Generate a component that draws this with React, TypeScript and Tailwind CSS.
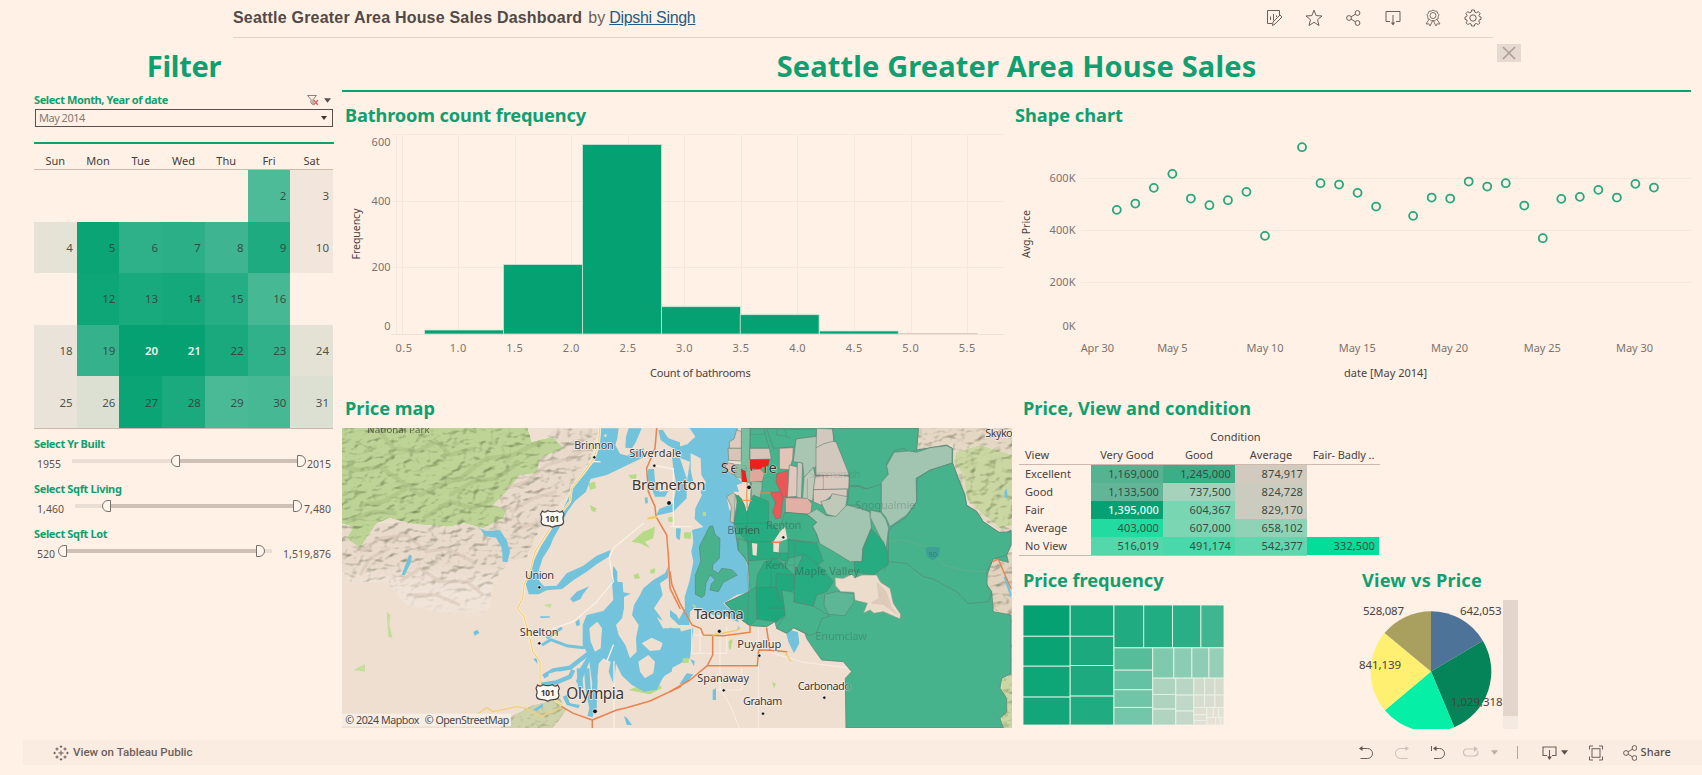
import React from "react";

const NOTO = '"Noto Sans", sans-serif';

/* ---------- calendar ---------- */

const DAYS = ["Sun", "Mon", "Tue", "Wed", "Thu", "Fri", "Sat"];
type Day = [number, string] | null;
const WEEKS: Day[][] = [
  [null, null, null, null, null, [2, "#4ebb98"], [3, "#f2e5dc"]],
  [[4, "#e5e3d6"], [5, "#0ba475"], [6, "#2eb089"], [7, "#2aaf86"], [8, "#3eb590"], [9, "#1eab7f"], [10, "#f2e5dc"]],
  [null, [12, "#0ea577"], [13, "#18a97c"], [14, "#14a87a"], [15, "#25ae84"], [16, "#46b894"], null],
  [[18, "#eae3d9"], [19, "#35b28b"], [20, "#05a173"], [21, "#05a173"], [22, "#19a97d"], [23, "#31b18a"], [24, "#e4e1d5"]],
  [[25, "#eae3d9"], [26, "#dbe0d3"], [27, "#0ba475"], [28, "#1baa7d"], [29, "#4aba96"], [30, "#46b894"], [31, "#dbe0d3"]],
];

function Calendar() {
  return (
    <div className="mt-[9px] h-[276px] w-[299px]">
      <div className="grid h-[17px] grid-cols-7 border-b border-[#cfb9ae] text-center text-[11px] leading-[15px] text-[#443c39]">
        {DAYS.map((d) => (
          <span key={d}>{d}</span>
        ))}
      </div>
      <div className="grid h-[259px] grid-cols-7 grid-rows-5 border-b border-[#cfb9ae]">
        {WEEKS.flat().map((d, i) =>
          d ? (
            <div
              key={i}
              className={`flex items-center justify-end pr-[4px] text-[11.5px] ${
                d[0] === 20 || d[0] === 21 ? "font-semibold text-[#e4f7ee]" : "text-[#33413a]/90"
              }`}
              style={{ backgroundColor: d[1] }}
            >
              {d[0]}
            </div>
          ) : (
            <div key={i} />
          ),
        )}
      </div>
    </div>
  );
}

/* ---------- range filters ---------- */

type Range = {
  title: string;
  min: string;
  max: string;
  track: [number, number];
  handles: [number, number];
  minLen: number;
  maxLen: number;
};
const RANGES: Range[] = [
  { title: "Select Yr Built", min: "1955", max: "2015", track: [38, 262], handles: [137, 272], minLen: 24, maxLen: 24 },
  { title: "Select Sqft Living", min: "1,460", max: "7,480", track: [41, 268], handles: [68, 268], minLen: 27, maxLen: 27 },
  { title: "Select Sqft Lot", min: "520", max: "1,519,876", track: [24, 238], handles: [24, 231], minLen: 18, maxLen: 48 },
];

function RangeFilter({ r }: { r: Range }) {
  const [a, b] = r.handles;
  return (
    <div className="h-[45px]">
      <div className="h-[16px] text-[11px] leading-[16px] font-bold tracking-[-0.350px] text-[#0f9f70]">{r.title}</div>
      <svg width="300" height="24" className="block" fontFamily={NOTO} fontSize="10.500" fill="#5b524e">
        <rect x={r.track[0]} y="7" width={r.track[1] - r.track[0]} height="4" fill="#eaddd3" />
        <rect x={a + 9} y="7" width={b - a - 18} height="4" fill="#cfc0b5" />
        <path
          d={`M${a + 8.5} 3.5 V14.5 H${a + 6} A5.5 5.5 0 0 1 ${a + 6} 3.5 Z`}
          fill="#fff6ee"
          stroke="#7b706a"
        />
        <path
          d={`M${b - 8.5} 3.5 V14.5 H${b - 6} A5.5 5.5 0 0 0 ${b - 6} 3.5 Z`}
          fill="#fff6ee"
          stroke="#7b706a"
        />
        <text x="3" y="15.500" textLength={r.minLen}>{r.min}</text>
        <text x={297 - r.maxLen} y="15.500" textLength={r.maxLen}>{r.max}</text>
      </svg>
    </div>
  );
}

/* ---------- histogram ---------- */

const BARS = [
  [82.6, 202],
  [161.5, 136.5],
  [240.6, 16.5],
  [319.6, 178.7],
  [398.2, 186.7],
  [477.4, 203],
];

function Histogram() {
  return (
    <svg width="670" height="262" className="block" fontFamily={NOTO} fontSize="11">
      <g stroke="#f6e7dc" strokeWidth="1">
        {[6.5, 73.5, 139.5].map((y) => (
          <path key={y} d={`M50 ${y}H662`} />
        ))}
        <path d="M54.5 6V206" />
        {Array.from({ length: 11 }, (_, i) => (
          <path key={i} d={`M${Math.round(59.5 + i * 56.57) + 0.5} 6V206`} />
        ))}
      </g>
      <path d="M50 206.5H662" stroke="#efdfd5" />
      {BARS.map(([x, y]) => (
        <rect key={x} x={x} y={y} width="78.9" height={206 - y} fill="#05a173" stroke="#cfe4d5" strokeWidth="0.8" />
      ))}
      <path d="M556 205.5H635.5" stroke="#dccbc1" />
      <g fill="#7d736e" textAnchor="end">
        <text x="48.500" y="17.500">600</text>
        <text x="48.500" y="76.500">400</text>
        <text x="48.500" y="142.500">200</text>
        <text x="48.500" y="202">0</text>
      </g>
      <g fill="#7d736e" textAnchor="middle">
        {Array.from({ length: 11 }, (_, i) => (
          <text key={i} x={i === 0 ? 61.7 : 59.4 + i * 56.57} y="224" textLength="16.5">
            {(0.5 + i * 0.5).toFixed(1)}
          </text>
        ))}
      </g>
      <g fill="#4b423e" textAnchor="middle">
        <text x="358.400" y="249" textLength="100.600">Count of bathrooms</text>
        <text transform="translate(18 106) rotate(-90)" textLength="51" fontSize="10.500">Frequency</text>
      </g>
    </svg>
  );
}

/* ---------- scatter of average price ---------- */

const POINTS: [number, number][] = [
  [2, 344], [3, 325], [4, 278], [5, 236], [6, 310], [7, 330], [8, 315], [9, 290], [10, 422], [12, 156],
  [13, 264], [14, 268], [15, 293], [16, 334], [18, 362], [19, 307], [20, 310], [21, 259], [22, 274], [23, 264],
  [24, 331], [25, 429], [26, 311], [27, 305], [28, 284], [29, 307], [30, 266], [31, 277],
];
const TICKS: [string, number][] = [
  ["Apr 30", 198], ["May 5", 368], ["May 10", 578], ["May 15", 787], ["May 20", 996], ["May 25", 1206], ["May 30", 1415],
];

function ShapeChart() {
  return (
    <svg width="679" height="262" className="block" fontFamily={NOTO} fontSize="11">
      <g stroke="#f6e7dc">
        <path d="M69 50.500H679M69 102.500H679M69 154.500H679" />
      </g>
      <g fill="none" stroke="#27a87c" strokeWidth="1.800">
        {POINTS.map(([d, y]) => (
          <circle key={d} cx={-2 + (242 + (d - 2) * 41.97) / 2.266} cy={y / 3 - 32.8} r="4" />
        ))}
      </g>
      <g fill="#7d736e" textAnchor="end">
        <text x="63.500" y="54" textLength="26">600K</text>
        <text x="63.500" y="106" textLength="26">400K</text>
        <text x="63.500" y="158" textLength="26">200K</text>
        <text x="63.500" y="202" textLength="13">0K</text>
      </g>
      <g fill="#7d736e" textAnchor="middle">
        {TICKS.map(([t, x]) => (
          <text key={t} x={x / 2.266 - 2} y="224" textLength={t.length === 5 ? 30.5 : t[0] === "A" ? 33.5 : 37}>
            {t}
          </text>
        ))}
      </g>
      <g fill="#4b423e" textAnchor="middle">
        <text x="373.500" y="249" textLength="83">date [May 2014]</text>
        <text transform="translate(18 106) rotate(-90)" textLength="48" fontSize="10.500">Avg. Price</text>
      </g>
    </svg>
  );
}

/* ---------- map ---------- */

const G = "#46b38d";
const DG = "#27ab80";
const SAGE = "#a1c5b1";
const GREY = "#d3c8be";

/* Zip-code areas drawn over the county: [fill, outline] */
const ZONES: [string, string][] = [
  [G, "240,100 282,100 290,135 298,160 240,160"],
  [G, "290,100 365,103 440,102 438,122 410,128 378,132 375,155 310,160"],
  ["#7abf9f", "214,100 240,100 238,200 240,260 232,265 214,225"],
  ["#e1cabd", "200,104 214,110 214,160 178,160 178,140 192,132"],
  ["#d8c5b8", "174,160 214,160 214,198 176,196"],
  ["#d5c6b9", "240,160 298,160 304,192 240,194"],
  ["#e5beb2", "160,203 190,206 194,240 176,232"],
  ["#88bd9f", "194,208 214,210 214,250 196,244"],
  ["#f01f1c", "240,194 298,194 294,212 276,216 268,227 256,220 240,222"],
  ["#f01f1c", "214,224 226,228 232,262 216,260"],
  ["#e0a79b", "240,228 270,222 282,236 276,258 240,260"],
  ["#9dbda7", "244,260 276,260 276,280 268,316 244,314"],
  ["#ea5756", "320,236 352,227 357,262 350,308 338,304 318,262"],
  ["#ea5756", "300,292 330,290 340,308 332,368 318,372 308,352 316,322"],
  ["#e5c3b7", "328,160 370,158 368,192 358,224 328,222"],
  ["#e0c8bd", "358,210 382,216 384,304 352,306"],
  ["#c9c6b9", "382,200 398,205 394,312 380,306"],
  ["#a9c6b2", "378,132 440,124 440,212 402,248 398,204 370,200"],
  ["#bfc9b9", "402,248 430,216 436,246 428,318 398,310"],
  [GREY, "440,100 488,102 492,140 462,148 438,160"],
  [GREY, "438,158 462,146 500,136 538,230 538,240 500,242 438,240"],
  ["#dac9bf", "436,244 500,240 538,244 536,282 430,284"],
  ["#dac7bd", "430,284 532,282 530,308 486,300 452,330 430,320"],
  ["#e1b0a4", "346,308 412,310 426,326 422,358 346,352"],
  ["#c0c8b8", "452,320 480,312 486,296 532,305 524,352 500,366 470,358"],
  [SAGE, "412,358 440,342 470,362 498,364 530,330 578,342 600,352 604,398 578,460 576,500 540,500 488,468 448,445 440,418 426,392 440,382"],
  [G, "492,140 488,100 745,100 740,165 718,172 700,160 672,168 650,205 655,240 640,270 590,282 570,272 538,272 538,240 498,140"],
  [G, "538,275 565,275 588,282 634,268 634,350 608,346 576,344 564,330 532,330"],
  [SAGE, "650,212 672,172 716,168 740,172 780,158 830,152 846,160 846,204 780,225 738,250 740,320 710,360 660,395 648,368 634,350 634,262 655,238"],
  [SAGE, "602,346 632,352 648,374 656,400 648,462 622,410 600,366"],
  [G, "668,392 708,368 740,320 742,250 780,226 848,204 864,250 884,300 890,332 920,350 940,380 985,412 1023,410 1023,450 1010,480 970,492 950,530 952,575 965,590 955,620 895,626 860,590 790,552 760,545 710,505 655,500 655,410"],
  [DG, "604,402 640,440 652,468 655,508 610,540 555,530 552,500 576,500 580,460"],
  ["#3eb188", "344,352 410,358 440,382 428,395 440,418 448,442 410,440 354,434 330,400"],
  [DG, "196,298 214,310 230,350 250,300 296,320 296,385 192,386 204,330"],
  [DG, "196,386 300,384 320,400 336,425 300,440 230,440 205,410"],
  ["#4bb38e", "205,430 232,440 236,510 222,485 204,465"],
  [DG, "234,440 310,440 310,470 328,475 326,490 236,498"],
  [DG, "354,434 440,445 460,498 440,510 400,480 354,490"],
  [DG, "328,474 354,474 354,500 330,495"],
  [DG, "400,476 448,512 490,560 470,590 440,600 430,635 372,620 372,545"],
  [DG, "284,500 320,490 372,540 372,580 258,578 262,540"],
  ["#1ba87b", "260,578 334,576 350,618 346,660 320,680 260,672 256,620"],
  ["#1fa97c", "318,536 372,540 372,585 330,620 318,570"],
  ["#36ad84", "165,624 236,590 258,576 260,672 240,692 215,674"],
  [G, "336,586 372,592 372,622 432,634 480,664 456,670 440,712 420,722 372,698 350,714 320,700 346,660"],
  ["#5db695", "464,598 500,590 552,596 552,622 524,662 476,658 462,630"],
];

const COUNTY =
  "240,100 745,100 740,165 830,150 848,160 848,205 865,250 885,300 890,330 920,350 940,380 985,410 1000,418 1023,405 1023,450 1010,480 1015,502 970,490 955,530 945,560 965,590 970,650 1023,660 1023,836 995,850 990,880 1010,910 1010,950 990,970 1000,999 528,999 526,850 545,830 520,800 455,795 430,760 410,730 405,715 370,698 350,715 320,700 315,680 290,695 240,692 215,675 165,625 240,590 234,500 205,465 192,385 204,300 230,340 240,300";

const CITIES: [string, number, number, number, number, number?][] = [
  ["National Park", 76, 14, 187, 29, 0.75],
  ["Brinnon", 697, 64, 118, 32],
  ["Silverdale", 862, 88, 156, 33],
  ["Bremerton", 869, 187, 222, 44],
  ["Union", 549, 453, 87, 33],
  ["Shelton", 533, 623, 117, 33],
  ["Olympia", 673, 813, 173, 46],
  ["Tacoma", 1055, 572, 150, 44],
  ["Puyallup", 1186, 659, 132, 33],
  ["Spanaway", 1066, 763, 155, 33],
  ["Graham", 1203, 832, 118, 33],
  ["Carbonado", 1367, 785, 160, 33],
  ["Skykomish", 1930, 26, 150, 33],
  ["Burien", 1156, 317, 98, 33, 0.6],
  ["Renton", 1272, 304, 106, 33, 0.35],
  ["Kent", 1270, 422, 68, 33, 0.3],
  ["Maple Valley", 1357, 442, 194, 33, 0.4],
  ["Enumclaw", 1420, 636, 155, 33, 0.25],
  ["Snoqualmie", 1540, 243, 180, 33, 0.22],
  ["Sammamish", 1400, 150, 155, 31, 0.12],
];
const DOTS: [number, number, number][] = [
  [757, 88, 5], [937, 113, 5], [981, 225, 7], [592, 478, 5], [592, 646, 5], [759, 850, 7], [1132, 610, 6],
  [1252, 683, 5], [1145, 787, 5], [1263, 857, 5], [1447, 809, 5], [1221, 178, 7], [1324, 328, 5],
];

function Shield({ x, y }: { x: number; y: number }) {
  return (
    <g transform={`translate(${x} ${y})`}>
      <path
        d="M-30 -23 Q-22 -16 -14 -24 Q0 -18 14 -24 Q22 -16 30 -23 L35 -13 Q29 -2 34 8 Q33 21 16 21 Q6 22 0 26 Q-6 22 -16 21 Q-33 21 -34 8 Q-29 -2 -35 -13Z"
        fill="#fdfaf5"
        stroke="#4a4542"
        strokeWidth="3.500"
      />
      <text textAnchor="middle" y="9" fontSize="25" fontWeight="700" fill="#3f3a38" textLength="42">
        101
      </text>
    </g>
  );
}

function PriceMap() {
  return (
    <svg viewBox="0 0 2010 900" className="block h-[300px] w-[670px]" fontFamily={NOTO}>
      <defs>
        <filter id="relief" x="0" y="0" width="100%" height="100%" colorInterpolationFilters="sRGB">
          <feTurbulence type="fractalNoise" baseFrequency="0.032 0.048" numOctaves="2" seed="11" result="n" />
          <feGaussianBlur in="n" stdDeviation="1.600" result="nb" />
          <feDiffuseLighting in="nb" surfaceScale="9" diffuseConstant="1.200" lightingColor="#ffffff" result="l">
            <feDistantLight azimuth="225" elevation="60" />
          </feDiffuseLighting>
          <feComponentTransfer in="l" result="lc">
            <feFuncR type="linear" slope="0.550" intercept="0.430" />
            <feFuncG type="linear" slope="0.500" intercept="0.480" />
            <feFuncB type="linear" slope="0.600" intercept="0.380" />
          </feComponentTransfer>
          <feBlend in="SourceGraphic" in2="lc" mode="multiply" result="m" />
          <feComposite in="m" in2="SourceGraphic" operator="in" />
        </filter>
        <linearGradient id="fadeDown" x1="0" y1="0" x2="0" y2="1">
          <stop offset="0.720" stopColor="#efdfd0" />
          <stop offset="1" stopColor="#efdfd0" stopOpacity="0" />
        </linearGradient>
      </defs>
      <rect width="2010" height="900" fill="#efdfd0" />

      {/* western land, in a frame shifted by the panel origin */}
      <g transform="translate(-6 -99)">
        <path
          filter="url(#relief)"
          d="M0 390 L200 380 L400 370 L520 260 L640 100 L778 100 L750 200 L690 290 L640 350 L600 400 L560 490 L510 500 L460 560 L450 640 L400 675 L200 630 L140 560 L30 560 L0 520Z"
          fill="url(#fadeDown)"
        />
        <path
          filter="url(#relief)"
          d="M0 90 L560 90 L575 140 L640 125 L670 160 L600 190 L590 235 L540 240 L500 290 L460 330 L500 345 L490 370 L430 400 L370 385 L330 395 L220 388 L150 370 L110 385 L80 430 L60 460 L20 430 L40 395 L0 385Z"
          fill="#c3d99a"
        />
        <g fill="none" stroke="#a3b87d" strokeWidth="13" strokeLinejoin="round" opacity="0.450">
          <path d="M0 215 L60 225 L120 215 L200 270 L240 300 L300 270 L360 250 L440 190 L520 180 L600 140 M60 330 L130 320 L200 280 M330 300 L400 260 L470 250 L540 200 M120 110 L160 160 L230 170 L290 140 L330 180 L400 160 M20 380 L100 350 L170 355 M250 370 L330 320 L400 340 L460 310" />
        </g>
        <g fill="none" stroke="#d3bfac" strokeWidth="10" strokeLinejoin="round" opacity="0.450">
          <path d="M490 280 L560 260 L620 210 L690 190 L740 160 M510 350 L580 310 L650 290 M60 470 L120 430 L200 420 L260 470 L320 460 L400 500 M180 560 L240 520 L300 560 L380 560 L430 600 M200 600 L290 600 L360 630 M540 400 L600 380 M60 540 L90 490 L150 460" />
        </g>
        <path d="M520 960 L580 930 L660 910 L680 945 L640 999 L480 999 L500 975Z" fill="#cdd6a6" opacity="0.800" filter="url(#relief)" />
        <g fill="#b7da87">
          <path d="M875 440 L910 410 L945 395 L940 430 L915 440 L930 460 L900 445Z" />
          <path d="M745 265 L765 260 L768 280 L750 285Z M865 240 L890 238 L888 252 L872 250Z M985 365 L1000 365 L1000 380 L985 380Z M880 540 L895 535 L900 550 L885 552Z M930 525 L946 520 L944 534 L932 536Z M750 330 L770 340 L765 352 L755 348Z M770 685 L785 685 L795 720 L780 715Z M865 885 L900 872 L935 880 L960 870 L965 880 L930 898Z" />
          <path d="M140 650 L152 660 L148 690 L158 730 L145 725Z M40 825 L75 808 L75 830Z M610 630 L635 626 L630 640Z" opacity="0.700" />
        </g>
        <g fill="#74c3dc">
          <path d="M783 100 L836 100 L832 130 L826 150 L840 176 L862 182 L880 168 L912 160 L908 188 L870 206 L830 226 L800 240 L752 252 L738 290 L705 318 L682 350 L656 402 L640 430 L630 455 L608 490 L592 540 L600 560 L612 574 L650 572 L680 535 L730 512 L770 482 L812 465 L806 485 L770 508 L740 530 L700 556 L666 582 L620 586 L596 598 L566 598 L556 562 L580 500 L602 455 L640 395 L660 360 L680 320 L700 275 L732 240 L765 196 L780 150Z" />
          <path d="M866 100 L905 100 L888 140 L876 160 L856 158 L858 125Z" />
          <path d="M955 106 L968 104 L985 130 L1020 142 L1020 170 L985 152 L962 135Z" />
          <path d="M996 186 L1020 190 L1040 250 L1040 310 L1000 350 L948 362 L958 342 L1000 325 L1010 270 L1000 220Z M925 222 L942 222 L945 258 L958 290 L985 288 L975 305 L945 305 L922 250Z M914 308 L922 306 L924 324 L916 326Z" />
          <path d="M420 400 L438 408 L480 406 L500 436 L510 470 L502 502 L488 500 L486 460 L468 428 L436 424Z" />
          <path d="M208 478 L216 484 L212 505 L194 540 L185 540 L198 505Z M400 710 L412 704 L418 714 L404 722Z" />
          <path d="M820 512 L832 530 L832 560 L848 562 L850 592 L872 596 L852 606 L852 640 L846 670 L828 690 L836 720 L856 750 L870 790 L890 770 L888 730 L896 690 L876 660 L882 630 L900 600 L910 580 L940 555 L975 535 L984 515 L984 548 L960 565 L968 600 L942 640 L960 664 L975 690 L1020 710 L1060 700 L1050 790 L990 822 L968 850 L950 884 L912 890 L876 870 L846 842 L828 806 L822 870 L806 830 L812 800 L790 790 L776 806 L772 850 L756 860 L748 800 L736 830 L720 870 L708 860 L720 820 L745 780 L728 750 L728 690 L740 660 L790 648 L820 615 L816 560Z" />
          <path d="M580 792 L592 788 L592 806Z M600 664 L630 664 L628 668 L602 669Z M706 680 L718 672 L720 690 L710 694Z M690 612 L710 590 L748 574 L730 596 L722 612 L700 622Z M1008 400 L1022 400 L1020 435 L1008 425Z M578 945 L610 925 L608 935 L590 948Z M852 962 L862 970 L876 990 L860 990Z M668 905 L680 900 L690 925 L720 930 L715 940 L680 930Z" />
        </g>
        <g fill="none" stroke="#74c3dc" strokeLinejoin="round">
          <path d="M606 750 L632 734 L680 752 L730 758 L756 750 M620 730 L666 698" strokeWidth="9" />
          <path d="M610 845 L640 826 L690 818 L720 795 L750 772 M600 870 L650 862 L690 845 L700 825" strokeWidth="13" />
          <path d="M740 820 L744 880 L756 940 L750 965 M765 850 L762 940 M718 820 L722 880" strokeWidth="16" />
        </g>
        <g fill="#efdfd0">
          <path d="M905 745 L935 728 L970 745 L960 765 L930 768Z M895 800 L925 780 L945 800 L940 835 L915 850 L900 830Z M748 700 L772 680 L786 700 L782 760 L765 770 L752 740Z M950 665 L985 690 L1010 740 L985 730Z" />
          <path d="M790 120 L800 118 L798 128Z M625 836 L655 828 L660 845 L630 850Z" />
        </g>
      </g>

      {/* Puget Sound, Seattle and the Cascades */}
      <g transform="translate(984 -99)">
        <path
          filter="url(#relief)"
          d="M742 90 H1030 V420 L1000 418 L920 360 L860 260 L848 150 L745 175Z"
          fill="#e9dcc8"
        />
        <path
          filter="url(#relief)"
          d="M860 170 L930 150 L1030 180 V390 L990 400 L930 350 L890 310 L880 240 L850 200Z"
          fill="#cfdca6"
        />
        <path filter="url(#relief)" d="M940 470 H1030 V999 H985 L990 660 L950 620Z" fill="#e6d8c4" />
        <path d="M995 850 L1030 838 V999 H995Z" fill="#cfdba8" filter="url(#relief)" />
        <g fill="#74c3dc">
          <path d="M58 98 L205 98 L192 140 L175 200 L176 235 L196 240 L218 264 L214 290 L190 290 L170 305 L178 345 L196 360 L192 385 L215 400 L205 440 L208 470 L228 490 L240 590 L200 600 L160 625 L176 640 L205 662 L205 682 L180 670 L160 660 L130 660 L100 648 L72 640 L60 650 L58 690 L35 690 L26 675 L45 640 L44 605 L58 560 L70 500 L64 470 L70 440 L66 405 L100 396 L74 372 L76 340 L96 300 L78 270 L50 265 L60 200 L20 185 L10 160 L45 150 L76 125Z" />
          <path d="M274 100 L290 104 L302 150 L318 190 L332 200 L336 228 L318 238 L318 262 L345 310 L345 345 L335 375 L310 372 L295 340 L300 300 L278 300 L276 250 L288 225 L304 195 L284 168Z" />
          <path d="M0 645 L20 660 L36 690 L26 690 L0 665Z M-20 700 L30 700 L42 740 L8 775 L10 800 L5 830 L-30 850Z M18 405 L32 402 L28 435 L20 430Z M28 868 L50 835 L70 838 L52 862Z M345 700 L384 712 L388 745 L372 775 L355 740Z M128 885 L138 880 L138 915 L128 915Z M145 672 L190 678 L210 700 L196 702 L165 690Z M60 792 L74 798 L72 814Z M1003 290 L1010 280 L1014 310 L1004 308Z M1000 545 L1010 545 L1023 590 V610Z" />
        </g>
        <g fill="#efdfd0">
          <path d="M60 105 L75 125 L50 150 L40 120Z M62 175 L92 190 L94 240 L108 262 L90 295 L70 262 L62 225Z" />
          <path d="M200 270 L226 262 L244 280 L240 330 L230 350 L214 310Z M130 664 L160 662 L200 684 L205 700 L160 712Z" />
        </g>
        <g fill="#b7da87">
          <path d="M42 412 L64 412 L62 432 L42 430Z M38 790 L56 788 L56 804 L38 804Z M0 368 L8 368 L8 380 L0 380Z M176 738 L188 732 L182 765 L176 758Z M98 352 L108 350 L108 364 L98 362Z M65 628 L78 632 L76 642Z M306 860 L318 866 L312 880Z" />
        </g>
        <path
          d="M65 700 V775 H170 V695 M90 700 V775 M150 720 V880 L180 930 L208 999 M215 815 V885 H140 M265 700 V999 M0 395 H66 M300 772 L400 802 L530 818 M70 720 H130"
          fill="none"
          stroke="#fbf1e8"
          strokeWidth="2.500"
        />

        <polygon points={COUNTY} fill={G} stroke="#5a8a78" strokeWidth="2.500" />
        <g stroke="#5f7f70" strokeOpacity="0.700" strokeWidth="2.500" strokeLinejoin="round">
          {ZONES.map(([fill, pts], i) => (
            <polygon key={i} points={pts} fill={fill} />
          ))}
          <path
            d="M118 395 L128 392 L136 420 L150 430 L148 490 L128 510 L128 525 L145 535 L155 520 L185 524 L202 540 L160 562 L145 590 L120 585 L125 565 L136 555 L120 540 L108 565 L104 600 L96 608 L76 598 L76 540 L92 500 L88 455Z"
            fill="#49b18c"
          />
          <path d="M170 305 L190 292 L196 300 L192 384 L180 380 L184 335Z" fill="#c8c4b7" />
        </g>
        <g fill="#efdfd0">
          <path d="M310 440 L330 410 L345 396 L352 432 L328 440 L326 472 L310 470Z M246 444 L262 446 L260 482 L248 480Z M216 262 L232 262 L242 280 L240 320 L230 350 L220 310Z" />
        </g>
        <g fill="none" stroke="#5f7f70" strokeOpacity="0.600" strokeWidth="2">
          <path d="M320 104 V120 L350 124 M345 104 L350 125 L362 130 M240 118 H284 M232 350 V440 M232 500 L236 600 L232 690 M304 490 V576 M318 510 H372 M290 640 H345 M318 576 V680 M655 505 L640 530 M374 440 V545 M412 250 V308 M460 240 V282" />
          <path d="M655 440 L700 435 L770 455 L820 510 L890 528 L955 530" stroke="#8cab86" strokeOpacity="0.500" />
        </g>
        <path
          d="M495 548 L520 550 L545 538 L556 548 L575 540 L620 540 L632 562 L660 580 L670 625 L692 658 L690 672 L640 650 L612 655 L600 645 L580 655 L592 625 L555 616 L552 592 L512 590 L496 572Z"
          fill="#ecdccb"
          stroke="#8a9a88"
          strokeWidth="2"
        />
        <path d="M620 560 L650 590 L665 635 L686 662 L640 630 L600 625 L625 610Z" fill="#ddcab8" />

        <g fill="none" strokeLinejoin="round" strokeLinecap="round">
          <path
            d="M0 530 L6 570 L30 625 L66 690 L92 700 L100 720 L160 722 L240 712 L240 692 M128 724 L128 780 L112 812 L262 812 L266 765 L300 766 L290 700 M300 766 L350 770 M0 890 L60 855 L112 812 M272 294 H300 M306 442 H330"
            stroke="#e8824f"
            strokeWidth="4.500"
          />
          <path d="M128 720 L200 706 L210 700 M346 772 L362 798" stroke="#f3c968" strokeWidth="4" />
          <path d="M232 262 L230 300 L232 340 M218 316 H244" stroke="#ee9c55" strokeWidth="4" />
          <path d="M968 500 L985 492 L1005 540 L1023 580" stroke="#e8824f" strokeWidth="4" />
        </g>
        <path d="M766 458 Q788 452 810 458 L806 484 L788 496 L770 484Z" fill="#2f8f9c" opacity="0.500" />
        <text x="788" y="486" fontSize="22" textAnchor="middle" fill="#2d7a72" opacity="0.800">90</text>
      </g>

      {/* western roads */}
      <g transform="translate(-6 -99)" fill="none" strokeLinejoin="round" strokeLinecap="round">
        <path d="M910 385 L820 460 L808 490 L820 560 L770 620 L700 680 L640 700 M800 800 L820 750 M750 200 H780 M945 212 L1000 222 V395 H1020 M822 800 V999" stroke="#fbf1e8" strokeWidth="4" />
        <path d="M779 100 L776 140 L762 190 L722 245 L695 280 L690 320 L640 385 L585 470 L570 530 L552 570 L548 610 L532 640 L552 665 L572 740 L578 770 L600 800 L600 870 L640 910 L668 932" stroke="#fff8e6" strokeWidth="7" />
        <path d="M779 100 L776 140 L762 190 L722 245 L695 280 L690 320 L640 385 L585 470 L570 530 L552 570 L548 610 L532 640 L552 665 L572 740 L578 770 L600 800 L600 870 L640 910 L668 932 M415 955 L440 938 L460 950 L530 935 L560 940 L600 965 L665 938" stroke="#f3cf7a" strokeWidth="4" />
        <path d="M950 100 L945 160 L920 220 L925 290 L945 335 L948 365 L980 420 L985 480 L990 580 L1020 640 M665 935 L700 955 L757 975 L830 945 L860 938 L930 918 L1022 875 M757 975 V999" stroke="#e8824f" strokeWidth="4.500" />
        <path d="M925 370 L948 366" stroke="#f3c968" strokeWidth="7" />
      </g>

      <text x="1136" y="136" fontSize="44" fill="#37312e" textLength="168" stroke="#fbf3ec" strokeWidth="2" paintOrder="stroke">
        Seattle
      </text>
      <g transform="translate(984 -99)">
        <polygon points="240,194 298,194 294,212 276,216 268,227 256,220 240,222" fill="#f01f1c" />
        <polygon points="240,228 270,222 282,236 276,258 240,260" fill="#e0a79b" />
        <polygon points="214,224 226,228 232,262 216,260" fill="#f01f1c" />
        <polygon points="194,208 214,210 214,250 196,244" fill="#9abca2" opacity="0.800" />
        <polygon points="214,195 240,195 240,260 232,260 226,226 214,222" fill="#7abf9f" opacity="0.850" />
      </g>
      {CITIES.map(([name, x, y, len, size, op]) => (
        <text
          key={name}
          x={x}
          y={y}
          fontSize={size}
          textLength={len}
          fill="#3b3532"
          opacity={op ?? 1}
          stroke="#fbf3ec"
          strokeOpacity={op ? 0 : 0.9}
          strokeWidth="4"
          paintOrder="stroke"
        >
          {name}
        </text>
      ))}
      <path d="M1514 760 H1534 V800 H1514Z" fill={G} opacity="0.700" />
      {DOTS.map(([x, y, r]) => (
        <circle key={`${x}`} cx={x} cy={y} r={r} fill="#111" stroke="#fff" strokeWidth="2" />
      ))}
      <Shield x={631} y={272} />
      <Shield x={617} y={794} />

      <rect x="0" y="857" width="507" height="38" fill="#f7f0e9" opacity="0.850" />
      <g fontSize="32" fill="#4d4744">
        <text x="10" y="887" textLength="222">© 2024 Mapbox</text>
        <text x="248" y="887" textLength="254">© OpenStreetMap</text>
      </g>
    </svg>
  );
}

/* ---------- view / condition table ---------- */

type Cell = [string, string] | null;
const ROWS: [string, Cell[]][] = [
  ["Excellent", [["1,169,000", "#55b391"], ["1,245,000", "#3bae87"], ["874,917", "#d2cabf"], null]],
  ["Good", [["1,133,500", "#62b698"], ["737,500", "#a6d1ba"], ["824,728", "#cbccbf"], null]],
  ["Fair", [["1,395,000", "#05a173"], ["604,367", "#79d6b3"], ["829,170", "#cbccbf"], null]],
  ["Average", [["403,000", "#22dba1"], ["607,000", "#7ad6b3"], ["658,102", "#8ed3b5"], null]],
  ["No View", [["516,019", "#52d8ab"], ["491,174", "#48d8a9"], ["542,377", "#5ed7ae"], ["332,500", "#04dc99"]]],
];

function ViewTable() {
  return (
    <div className="w-[361px] pt-[7px] text-[11px] text-[#4b423e]">
      <div className="h-[18px] pl-[72px] text-center leading-[18px]">Condition</div>
      <div className="grid h-[19px] grid-cols-[72px_72px_72px_72px_73px] border-b border-[#cfb9ae] text-center leading-[17px]">
        <span className="pl-[6px] text-left">View</span>
        <span>Very Good</span>
        <span>Good</span>
        <span>Average</span>
        <span className="tracking-[-0.100px] whitespace-nowrap">Fair- Badly ..</span>
      </div>
      {ROWS.map(([name, cells]) => (
        <div key={name} className="grid h-[18px] grid-cols-[72px_72px_72px_72px_72px] leading-[17px]">
          <span className="pl-[6px]">{name}</span>
          {cells.map((c, i) =>
            c ? (
              <span
                key={i}
                className={`pr-[4px] text-right tracking-[0.100px] ${c[0] === "1,395,000" ? "font-medium text-[#e9faf2]" : "text-[#3c4a43]"}`}
                style={{ backgroundColor: c[1] }}
              >
                {c[0]}
              </span>
            ) : (
              <span key={i} />
            ),
          )}
        </div>
      ))}
      <div className="h-px w-[288px] bg-[#cfb9ae]" />
    </div>
  );
}

/* ---------- treemap ---------- */

const TILES: [number, number, number, number, string][] = [
  [0, 0, 141, 94, "#05a173"], [0, 94, 141, 90, "#09a374"], [0, 184, 141, 93, "#0ea577"], [0, 277, 141, 84, "#13a67a"],
  [141, 0, 131, 94, "#15a87b"], [141, 94, 131, 88, "#1ca97e"], [141, 182, 131, 92, "#1eaa7f"], [141, 274, 131, 87, "#20ab80"],
  [272, 0, 89, 129, "#20ab80"], [361, 0, 86, 129, "#21ad82"], [447, 0, 85, 129, "#28af86"], [532, 0, 69, 129, "#40b690"],
  [272, 129, 116, 67, "#56bd9b"], [272, 196, 116, 59, "#65c1a3"], [272, 255, 116, 53, "#6fc5a8"], [272, 308, 116, 53, "#74c6aa"],
  [388, 129, 63, 91, "#7fc9af"], [451, 129, 54, 91, "#8bcdb4"], [505, 129, 51, 91, "#8ecdb5"], [556, 129, 45, 91, "#96cfb8"],
  [388, 220, 69, 49, "#aed3bf"], [388, 269, 69, 44, "#aed3bf"], [388, 313, 69, 48, "#b0d4c0"],
  [457, 220, 54, 51, "#b9d6c4"], [457, 271, 54, 48, "#bfd8c7"], [457, 319, 54, 42, "#c3d8c8"],
  [511, 220, 32, 51, "#cfdacb"], [543, 220, 31, 51, "#d3dbcd"], [574, 220, 27, 51, "#d6dbcd"],
  [511, 271, 32, 37, "#d6dccf"], [543, 271, 31, 37, "#d8dccf"], [574, 271, 27, 37, "#dadccf"],
  [511, 308, 39, 22, "#dfddd0"], [511, 330, 39, 17, "#e1ded2"], [511, 347, 39, 14, "#e3ded3"],
  [550, 308, 19, 30, "#e4dfd3"], [569, 308, 16, 30, "#e6dfd4"], [585, 308, 16, 30, "#e6dfd4"],
  [550, 338, 26, 23, "#e8e0d5"], [576, 338, 14, 23, "#eae0d6"], [590, 338, 11, 23, "#ebe1d7"],
];

function Treemap() {
  return (
    <svg viewBox="0 0 601 361" preserveAspectRatio="none" className="mt-[12px] ml-[4px] block h-[120px] w-[201px]">
      {TILES.map(([x, y, w, h, c]) => (
        <rect key={`${x}-${y}`} x={x} y={y} width={w} height={h} fill={c} stroke="#e9f3e8" strokeWidth="2.600" />
      ))}
    </svg>
  );
}

/* ---------- pie ---------- */

const SLICES: [number, number, string][] = [
  [0, 59.3, "#4e7399"],
  [59.3, 157.3, "#05845a"],
  [157.3, 230, "#05efa6"],
  [230, 309.6, "#fff072"],
  [309.6, 360, "#a9a05f"],
];
const rim = (deg: number) => {
  const t = (deg * Math.PI) / 180;
  return `${(74 + 60.3 * Math.sin(t)).toFixed(2)} ${(71.5 - 60.3 * Math.cos(t)).toFixed(2)}`;
};

function Pie() {
  return (
    <div className="flex">
      <svg width="146" height="129" className="block" fontFamily={NOTO} fontSize="11.500" fill="#4b423e">
        {SLICES.map(([a, b, c]) => (
          <path key={c} d={`M74 71.500 L${rim(a)} A60.300 60.300 0 0 1 ${rim(b)}Z`} fill={c} />
        ))}
        <text x="6" y="15" textLength="41">528,087</text>
        <text x="103" y="15" textLength="41.500">642,053</text>
        <text x="2" y="68.500" textLength="42">841,139</text>
        <text x="94" y="105.500" textLength="51.500">1,029,318</text>
      </svg>
      <div className="h-[129px] w-[15px] bg-[#f5eae1]">
        <div className="h-[116px] bg-[#e1d5cc]" />
      </div>
    </div>
  );
}

/* ---------- icons ---------- */

function Ic({ children, w = 18, s = "#6b5f59" }: { children: React.ReactNode; w?: number; s?: string }) {
  return (
    <svg width={w} height="18" viewBox={`0 0 ${w} 18`} fill="none" stroke={s} strokeWidth="1" className="block shrink-0">
      {children}
    </svg>
  );
}

const SHARE = (
  <>
    <circle cx="4" cy="9" r="2.400" />
    <circle cx="12.500" cy="4" r="2.400" />
    <circle cx="12.500" cy="14" r="2.400" />
    <path d="M6.100 7.800L10.400 5.200M6.100 10.200L10.400 12.800" />
  </>
);

function HeaderIcons() {
  return (
    <div className="flex h-[18px] gap-[21.800px]">
      <Ic>
        <path d="M14.500 6V1.500H2.500V14.500L7 14.500M5.500 11V7.500M8.500 11.500V5M11.500 8V6.500" />
        <path d="M8 13L15 6L17 8L10 15L7.500 16.500Z" />
      </Ic>
      <Ic>
        <path d="M9 1.200L11.100 6.600L17 7L12.500 10.700L14 16.500L9 13.300L4 16.500L5.500 10.700L1 7L6.900 6.600Z" />
      </Ic>
      <Ic>{SHARE}</Ic>
      <Ic>
        <path d="M6 12.500H2V2.500H16V12.500H12M9 6V15" />
        <path d="M6.800 13.500H11.200L9 16.500Z" fill="#6b5f59" stroke="none" />
      </Ic>
      <Ic s="#7d726c">
        <path d="M9 1L10.800 2.100L12.900 2.200L13.600 4.200L15 5.800L14.200 7.700L14.100 9.800L12 10.500L10.500 12L9 11.300L7.500 12L6 10.500L3.900 9.800L3.800 7.700L3 5.800L4.400 4.200L5.100 2.200L7.200 2.100Z" />
        <circle cx="9" cy="6.500" r="3" />
        <path d="M5 10.500L2 15L4.800 14.800L6 17L8.500 12M13 10.500L16 15L13.200 14.800L12 17L9.500 12" />
      </Ic>
      <Ic>
        <path d="M7.600 1H10.400L10.900 3.200L12.300 3.800L14.300 2.600L16.100 4.600L14.900 6.500L15.400 7.600L17 8V10.400L15.300 10.800L14.800 12.100L15.900 13.900L14.200 15.600L12.300 14.500L10.900 15L10.400 17H7.600L7.100 15L5.700 14.500L3.800 15.600L2.100 13.900L3.200 12.100L2.700 10.800L1 10.400V8L2.600 7.600L3.100 6.500L1.900 4.600L3.700 2.600L5.700 3.800L7.100 3.200Z" />
        <circle cx="9" cy="9" r="3.200" />
      </Ic>
    </div>
  );
}

function TableauMark() {
  const cross = (x: number, y: number, r: number) => `M${x - r} ${y}H${x + r}M${x} ${y - r}V${y + r}`;
  return (
    <svg width="16" height="16" viewBox="0 0 16 16" fill="none" stroke="#6b5f59" strokeWidth="1.100" className="block">
      <path d={cross(8, 8, 2.6)} />
      <path d={[cross(4, 4, 1.6), cross(12, 4, 1.6), cross(4, 12, 1.6), cross(12, 12, 1.6)].join("")} />
      <path d={[cross(8, 1.6, 1.2), cross(8, 14.4, 1.2), cross(1.6, 8, 1.2), cross(14.4, 8, 1.2)].join("")} />
    </svg>
  );
}

function Caret({ c = "#5b504b" }: { c?: string }) {
  return (
    <svg width="7" height="5" viewBox="0 0 7 5" className="block">
      <path d="M0 0.300H7L3.500 4.800Z" fill={c} />
    </svg>
  );
}

function FooterTools() {
  return (
    <div className="flex items-center pr-[31px]">
      <Ic w={16}>
        <path d="M3 4.500H9.500A5 5 0 0 1 9.500 14.500H2.500" />
        <path d="M4.500 2V7L1 4.500Z" fill="#5b504b" stroke="none" />
      </Ic>
      <span className="ml-[20px]">
        <Ic w={16} s="#cdbfb6">
          <path d="M13 4.500H6.500A5 5 0 0 0 6.500 14.500H13.500" />
          <path d="M11.500 2V7L15 4.500Z" fill="#cdbfb6" stroke="none" />
        </Ic>
      </span>
      <span className="ml-[20px]">
        <Ic w={16}>
          <path d="M4 4.500H9.500A5 5 0 0 1 9.500 14.500H4M1.500 2V7" />
          <path d="M6.500 2V7L3 4.500Z" fill="#5b504b" stroke="none" />
        </Ic>
      </span>
      <span className="ml-[17px]">
        <Ic w={16} s="#cdbfb6">
          <path d="M12 5H4A3.500 3.500 0 0 0 4 12H12A3.500 3.500 0 0 0 14.500 7" strokeWidth="1.200" />
          <path d="M11 2V8L15 5Z" fill="#cdbfb6" stroke="none" />
        </Ic>
      </span>
      <span className="ml-[12px]">
        <Caret c="#bdafa6" />
      </span>
      <span className="ml-[19px] h-[13px] w-px bg-[#b3a59c]" />
      <span className="ml-[24px]">
        <Ic w={15}>
          <path d="M5 11.500H1V3H14V11.500H10M7.500 6V14" strokeWidth="1.100" />
          <path d="M5.200 12.500H9.800L7.500 16Z" fill="#5b504b" stroke="none" />
        </Ic>
      </span>
      <span className="ml-[4px]">
        <Caret />
      </span>
      <span className="ml-[20px]">
        <Ic w={16}>
          <path d="M1.500 5.500V2H5M11 2H14.500V5.500M14.500 12.500V16H11M5 16H1.500V12.500" />
          <rect x="4" y="4.700" width="8" height="8.600" />
        </Ic>
      </span>
      <span className="ml-[18px]">
        <Ic w={15}>{SHARE}</Ic>
      </span>
      <span className="ml-[4px] text-[11px] font-medium tracking-[0.100px] text-[#574d48]">Share</span>
    </div>
  );
}

function Heading({ children, tracking = "tracking-normal" }: { children: React.ReactNode; tracking?: string }) {
  return (
    <h2 className={`h-[24px] text-[18.200px] leading-[22px] font-bold whitespace-nowrap text-[#0f9f70] ${tracking}`}>
      {children}
    </h2>
  );
}

/* ---------- page ---------- */

export default function App() {
  return (
    <div className="flex h-[775px] w-[1702px] flex-col overflow-hidden bg-[#fff1e6] font-['Noto_Sans',sans-serif]">
      <header className="ml-[233px] flex h-[38px] w-[1260px] shrink-0 items-center justify-between border-b border-[#e2d2c8] pr-[11px] pb-[2px]">
        <div className="flex items-baseline font-['Liberation_Sans',sans-serif] text-[16px]">
          <h1 className="font-bold tracking-[0.200px] text-[#524a46]">Seattle Greater Area House Sales Dashboard</h1>
          <span className="ml-[6px] text-[#6b625d]">by</span>
          <a className="ml-[4px] tracking-[-0.300px] text-[#255a87] underline">Dipshi Singh</a>
        </div>
        <HeaderIcons />
      </header>

      <div className="flex h-[702px] shrink-0 pl-[34px]">
        <aside className="w-[300px]">
          <h2 className="mt-[8px] h-[41px] text-center text-[29px] leading-[40px] font-bold tracking-[-0.300px] text-[#0f9f70]">
            Filter
          </h2>
          <div className="mt-[5px] flex h-[17px] items-center justify-between pr-[3px]">
            <span className="text-[11px] font-bold tracking-[-0.400px] text-[#0f9f70]">Select Month, Year of date</span>
            <span className="flex items-center gap-[5px]">
              <svg width="12" height="11" viewBox="0 0 12 11" fill="none" className="block">
                <path d="M0.500 0.500H9.500L6 4.500V9.500L4 8V4.500Z" stroke="#8a7f79" />
                <path d="M6.500 5L11 10M11 5L6.500 10" stroke="#d8615c" strokeWidth="1.200" />
              </svg>
              <Caret />
            </span>
          </div>
          <div className="ml-[1px] flex h-[18px] w-[298px] items-center justify-between border border-[#5b504b] pr-[5px] pl-[3px] text-[11px] text-[#857a74]">
            <span className="tracking-[-0.500px]">May 2014</span>
            <svg width="6" height="4" viewBox="0 0 6 4" className="block">
              <path d="M0 0H6L3 4Z" fill="#3d3532" />
            </svg>
          </div>
          <div className="mt-[15px] h-[2px] bg-[#0f9f70]" />
          <Calendar />
          <div className="pt-[7px]">
            {RANGES.map((r) => (
              <RangeFilter key={r.title} r={r} />
            ))}
          </div>
        </aside>

        <main className="ml-[8px] w-[1349px]">
          <div className="flex h-[54px] border-b-2 border-[#0f9f70]">
            <h2 className="mt-[8px] w-[1155px] pl-[194px] text-center text-[29px] leading-[40px] font-bold tracking-[0.150px] whitespace-nowrap text-[#0f9f70]">
              Seattle Greater Area House Sales
            </h2>
            <button className="mt-[6px] flex h-[18px] w-[24px] items-center justify-center bg-[#e6d9d0]" aria-label="Close">
              <svg width="14" height="14" viewBox="0 0 14 14" stroke="#aa9d95" strokeWidth="1.500" className="block">
                <path d="M1 1L13 13M13 1L1 13" />
              </svg>
            </button>
          </div>

          <div className="flex h-[302px] pt-[12px]">
            <section className="w-[670px]">
              <div className="pl-[3px]">
                <Heading tracking="tracking-[-0.130px]">Bathroom count frequency</Heading>
              </div>
              <Histogram />
            </section>
            <section className="w-[679px]">
              <div className="pl-[3px]">
                <Heading>Shape chart</Heading>
              </div>
              <ShapeChart />
            </section>
          </div>

          <div className="flex pt-[3px]">
            <section className="w-[670px]">
              <div className="mb-[7px] pl-[3px]">
                <Heading>Price map</Heading>
              </div>
              <PriceMap />
            </section>
            <section className="ml-[7px]">
              <div className="pl-[4px]">
                <Heading>Price, View and condition</Heading>
              </div>
              <ViewTable />
              <div className="flex pt-[13px]">
                <div className="w-[338px]">
                  <div className="pl-[4px]">
                    <Heading tracking="tracking-[-0.050px]">Price frequency</Heading>
                  </div>
                  <Treemap />
                </div>
                <div>
                  <div className="mb-[7px] pl-[5px]">
                    <Heading tracking="tracking-[0.200px]">View vs Price</Heading>
                  </div>
                  <Pie />
                </div>
              </div>
            </section>
          </div>
        </main>
      </div>

      <footer className="ml-[23px] flex h-[25px] shrink-0 items-center justify-between bg-[#fbece2] pl-[30px]">
        <div className="flex items-center gap-[4px] text-[11.500px] text-[#6b605a]">
          <TableauMark />
          <span className="font-['Roboto',sans-serif] font-medium tracking-[0.030px]">View on Tableau Public</span>
        </div>
        <FooterTools />
      </footer>
    </div>
  );
}
